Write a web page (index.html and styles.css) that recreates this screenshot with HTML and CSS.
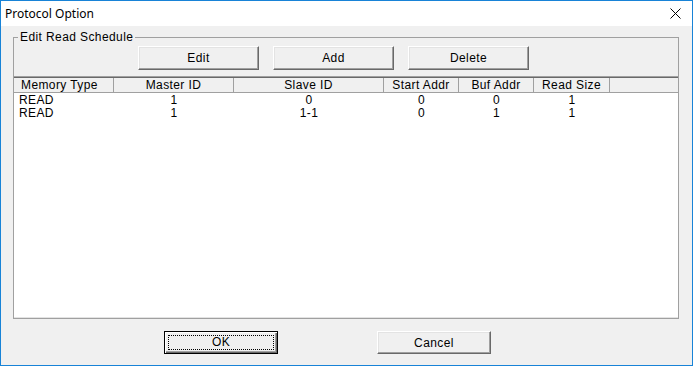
FILE: index.html
```html
<!DOCTYPE html>
<html lang="en">
<head>
    <meta charset="UTF-8">
    <title>Protocol Option</title>
    <link rel="stylesheet" href="styles.css">
</head>
<body>
    <div class="window">
        <div class="titlebar">
            <span class="title">Protocol Option</span>
            <svg class="close" width="11" height="11" viewBox="0 0 11 11">
                <path d="M0.5 0.5 L10.5 10.5 M10.5 0.5 L0.5 10.5" stroke="#000" stroke-width="1" fill="none"/>
            </svg>
        </div>
        <div class="content">
            <fieldset class="group">
                <legend>Edit Read Schedule</legend>
                <div class="toolbar">
                    <button class="btn">Edit</button>
                    <button class="btn">Add</button>
                    <button class="btn">Delete</button>
                </div>
                <div class="list">
                    <div class="row head">
                        <span class="left">Memory Type</span>
                        <span>Master ID</span>
                        <span>Slave ID</span>
                        <span>Start Addr</span>
                        <span>Buf Addr</span>
                        <span>Read Size</span>
                        <span class="rest"></span>
                    </div>
                    <div class="row">
                        <span class="left">READ</span>
                        <span>1</span>
                        <span>0</span>
                        <span>0</span>
                        <span>0</span>
                        <span>1</span>
                        <span></span>
                    </div>
                    <div class="row">
                        <span class="left">READ</span>
                        <span>1</span>
                        <span>1-1</span>
                        <span>0</span>
                        <span>1</span>
                        <span>1</span>
                        <span></span>
                    </div>
                </div>
            </fieldset>
            <div class="footer">
                <button class="btn wide default"><span class="focus">OK</span></button>
                <button class="btn wide">Cancel</button>
            </div>
        </div>
    </div>
</body>
</html>
```
FILE: styles.css
```css
* {
    box-sizing: border-box;
}
body {
    margin: 0;
    font-family: "Liberation Sans", Arial, sans-serif;
    font-size: 12px;
    letter-spacing: 0.4px;
    color: #000;
}
.window {
    width: 693px;
    height: 366px;
    border: 1px solid #1883d7;
    display: flex;
    flex-direction: column;
    background: #f0f0f0;
}
.titlebar {
    height: 25px;
    background: #fff;
    display: flex;
    align-items: center;
    justify-content: space-between;
    padding: 0 11px 0 4px;
}
.title {
    font-family: "Noto Sans", "Liberation Sans", sans-serif;
    font-size: 12px;
    letter-spacing: 0;
}
.close {
    display: block;
    margin-top: -1px;
}
.content {
    flex: 1;
    padding-top: 4px;
}
.group {
    margin: 0 13px 0 12px;
    padding: 0;
    border: 1px solid #a0a0a0;
    border-bottom: none;
    min-width: 0;
}
.group legend {
    margin-left: 4px;
    padding: 0 2px;
    line-height: 14px;
}
.toolbar {
    display: flex;
    gap: 14px;
    padding-left: 124px;
    margin-top: 2px;
}
.btn {
    font: inherit;
    letter-spacing: inherit;
    color: #000;
    width: 121px;
    height: 24px;
    padding: 0;
    background: #f0f0f0;
    border: 1px solid;
    border-color: #fff #696969 #696969 #fff;
    box-shadow: inset -1px -1px 0 #a0a0a0, inset 1px 1px 0 #e3e3e3;
}
.list {
    margin-top: 6px;
    height: 243px;
    background: #fff;
    border-top: 1px solid #a0a0a0;
    border-bottom: 1px solid #a0a0a0;
    box-shadow: inset 0 -1px 0 #e3e3e3;
}
.row {
    display: grid;
    grid-template-columns: 100px 120px 150px 75px 75px 76px 1fr;
    line-height: 13px;
    height: 13px;
}
.row span {
    text-align: center;
    white-space: nowrap;
}
.row .left {
    text-align: left;
    padding-left: 5px;
}
.head {
    background: #f0f0f0;
    border-top: 1px solid #696969;
    border-bottom: 1px solid #a0a0a0;
    line-height: 14px;
    height: 16px;
    margin-bottom: 1px;
}
.head span {
    border-right: 1px solid #a0a0a0;
}
.head .left {
    padding-left: 7px;
}
.head .rest {
    border-right: none;
}
.footer {
    display: flex;
    gap: 99px;
    padding-left: 163px;
    margin-top: 12px;
}
.btn.wide {
    width: 114px;
    height: 23px;
}
.btn.default {
    border: 1px solid #000;
    box-shadow: inset 1px 1px 0 #fff, inset -1px -1px 0 #696969, inset -2px -2px 0 #a0a0a0;
    padding: 3px;
}
.focus {
    display: block;
    height: 100%;
    border: 1px dotted #000;
    line-height: 13px;
}
```
